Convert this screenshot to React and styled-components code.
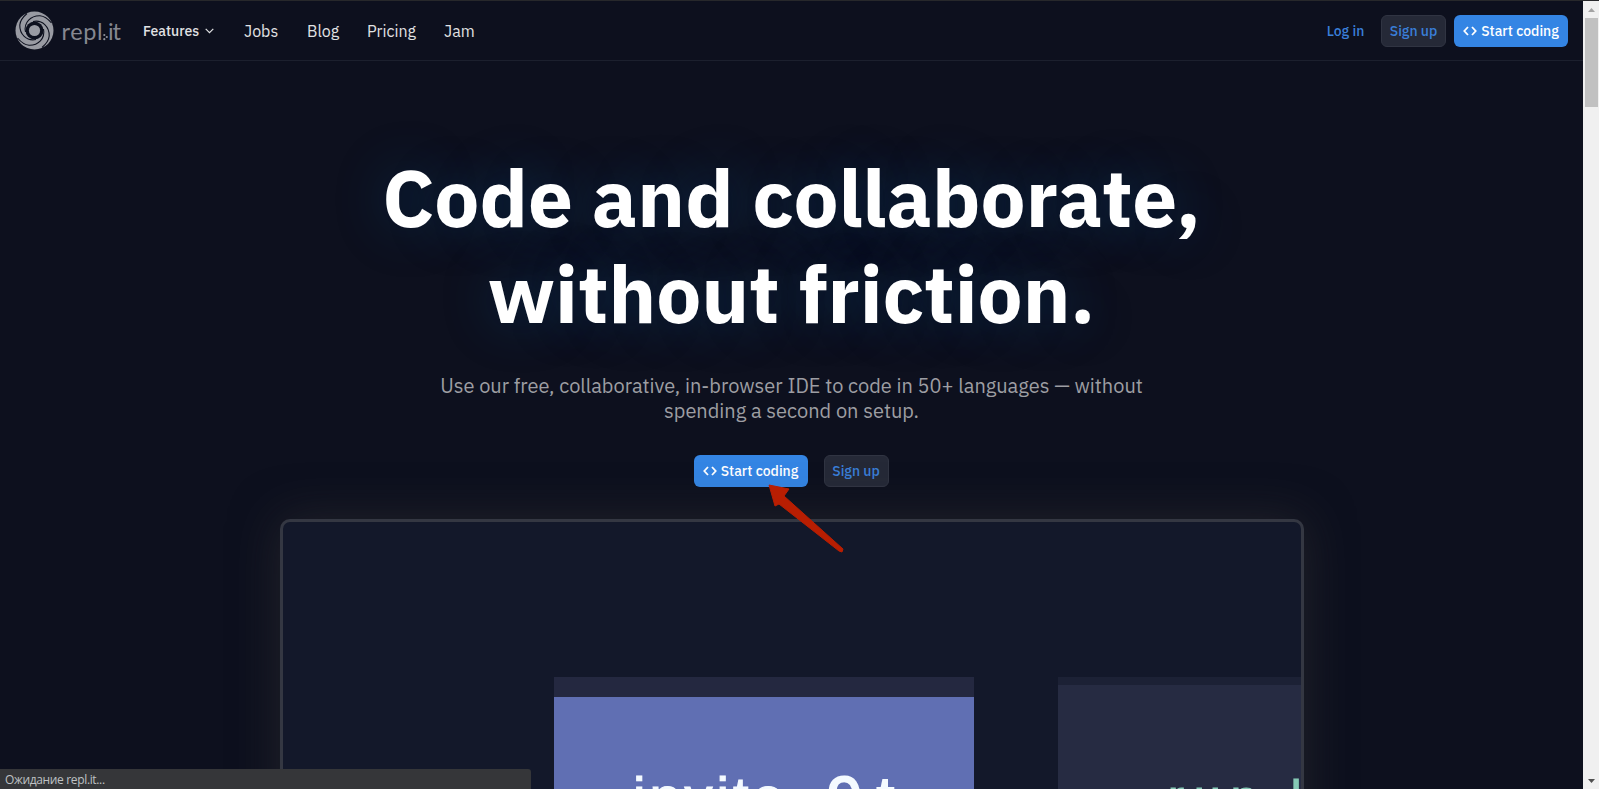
import React from "react";
import styled, { createGlobalStyle, css } from "styled-components";

const Global = createGlobalStyle`
  * { box-sizing: border-box; }
  html, body, #root { margin: 0; height: 789px; overflow: hidden; }
  body { background: #0d101e; font-family: "IBM Plex Sans", "Noto Sans", "Open Sans", sans-serif; color: #e1e2e4; }
`;
const Window = styled.div`
  position: relative;
  display: flex;
  width: 1599px;
  height: 789px;
  overflow: hidden;
`;
const Page = styled.div`
  width: 1583px;
  height: 789px;
  overflow: hidden;
  border-top: 1px solid #27282b;
  background: #0d101e;
`;
const Header = styled.header`
  display: flex;
  align-items: center;
  height: 60px;
  padding: 0 15px 0 14px;
  border-bottom: 1px solid #1c202e;
`;
const Brand = styled.a`
  display: flex;
  align-items: center;
  width: 129px;
  height: 42px;
`;
const Nav = styled.nav`
  display: flex;
  align-items: center;
  flex: 1;
  height: 32px;
`;
const NavLink = styled.a`
  display: flex;
  align-items: center;
  width: ${(p) => p.$width}px;
  font-size: ${(p) => (p.$menu ? 14 : 16)}px;
  font-weight: ${(p) => (p.$menu ? 500 : 400)};
  line-height: 24px;
  white-space: nowrap;
  svg { margin-left: 6px; }
`;
const Actions = styled.div`
  display: flex;
  gap: ${(p) => p.$gap}px;
`;
const Button = styled.button`
  display: flex;
  align-items: center;
  justify-content: center;
  gap: 4px;
  width: ${(p) => p.$width}px;
  height: 32px;
  padding: 0;
  border: 1px solid transparent;
  border-radius: 6px;
  background: none;
  color: #3a7fd9;
  font: 500 14px/20px "IBM Plex Sans", "Noto Sans", "Open Sans", sans-serif;
  white-space: nowrap;
  ${(p) => p.$kind === "secondary" && css`background: #252937; border-color: #303442;`}
  ${(p) => p.$kind === "primary" && css`background: #3485e4; color: #fff;`}
`;
const Hero = styled.main`
  display: flex;
  flex-direction: column;
  align-items: center;
`;
const Title = styled.h1`
  margin: 88px 0 0;
  color: #fff;
  font-size: 80px;
  font-weight: 700;
  line-height: 96px;
  text-align: center;
  text-shadow: 0 0 50px rgba(0, 80, 140, 0.42);
`;
const Line = styled.span`
  display: block;
  white-space: nowrap;
`;
const Lead = styled.p`
  margin: 32px 0 0;
  color: #9d9ea3;
  font-size: 20px;
  line-height: 25px;
  text-align: center;
`;
const HeroActions = styled(Actions)`
  margin-top: 32px;
  margin-right: 1px;
`;
const Preview = styled.section`
  display: flex;
  align-items: flex-start;
  width: 1024px;
  height: 580px;
  margin-top: 32px;
  margin-left: 1px;
  padding: 155px 0 0 271px;
  border: 3px solid #343742;
  border-radius: 10px;
  overflow: hidden;
  background: #13182a;
  box-shadow: 0 0 48px rgba(56, 54, 54, 0.5);
`;
const Tile = styled.div`
  flex: none;
  width: ${(p) => p.$width}px;
  height: 500px;
  margin-right: ${(p) => p.$after || 0}px;
  padding-top: ${(p) => p.$pad}px;
  padding-left: ${(p) => p.$inset}px;
  border-top: solid ${(p) => p.$edge};
  border-top-width: ${(p) => p.$band}px;
  background: ${(p) => p.$fill};
  color: ${(p) => p.$ink};
  font: ${(p) => p.$size}px/64px "Liberation Sans", Arial, sans-serif;
  letter-spacing: ${(p) => p.$track}px;
  -webkit-text-stroke: 1.2px ${(p) => p.$ink};
  white-space: pre;
  filter: blur(0.7px);
`;
const TileMark = styled.span`
  font-size: 64px;
  line-height: 40px;
  letter-spacing: 14px;
  vertical-align: -6px;
  -webkit-text-stroke-width: 2px;
`;
const Scrollbar = styled.div`
  display: flex;
  flex-direction: column;
  align-items: center;
  width: 16px;
  height: 789px;
  border-top: 1px solid #27282b;
  background: #f0f0f0;
`;
const ScrollArrow = styled.svg`
  flex: none;
  width: 16px;
  height: 17px;
`;
const Thumb = styled.div`
  width: 13px;
  height: 89px;
  margin-bottom: auto;
  background: #c1c1c1;
`;
const Status = styled.div`
  position: absolute;
  left: 0;
  bottom: 0;
  width: 531px;
  height: 20px;
  padding-left: 5px;
  border-radius: 0 3px 0 0;
  background: #353639;
  color: #bfc1c4;
  font: 12px/21px "Open Sans", "Noto Sans", sans-serif;
  letter-spacing: -0.35px;
`;
const Pointer = styled.svg`
  position: absolute;
  left: 766px;
  top: 482px;
  width: 80px;
  height: 72px;
`;

const Logo = () => (
  <svg width="108" height="42" viewBox="0 0 108 42">
    <circle cx="20.5" cy="20.5" r="19" fill="#999ba3" />
    <circle cx="20.5" cy="20.5" r="9" fill="#0d101e" />
    <circle cx="20.5" cy="20.5" r="5.600" fill="#999ba3" />
    {[0, 90, 180, 270].map((a) => (
      <path key={a} transform={`rotate(${a} 20.5 20.5)`} d="M11.5 22C9.500 12.500 17 5.500 26 5.800C31 6.200 34.500 9.500 37.500 13" fill="none" stroke="#0d101e" strokeWidth="1.1" />
    ))}
    <text x="47.5" y="29.5" fill="#858790" fontFamily="Lato, sans-serif" fontWeight="400" fontSize="23.5" textLength="41">repl</text>
    <circle cx="90.300" cy="25" r="1.100" fill="#8e9099" />
    <circle cx="92.800" cy="27" r="1.100" fill="#8e9099" />
    <circle cx="90.300" cy="29.200" r="1.100" fill="#8e9099" />
    <text x="94" y="29.5" fill="#858790" fontFamily="Lato, sans-serif" fontWeight="400" fontSize="23.5" textLength="13">it</text>
  </svg>
);
const Chevron = () => (
  <svg width="9" height="6" viewBox="0 0 9 6" fill="none" stroke="#e1e2e4" strokeWidth="1.2"><path d="M.7.8 4.5 4.6 8.3.8" /></svg>
);
const CodeIcon = () => (
  <svg width="14" height="10" viewBox="0 0 14 10" fill="none" stroke="#fff" strokeWidth="1.8"><path d="M5 1 1.300 5 5 9M9 1 12.700 5 9 9" /></svg>
);
const StartCoding = () => (
  <Button $kind="primary" $width={114}><CodeIcon />Start coding</Button>
);

export default function App() {
  return (
    <Window>
      <Global />
      <Page>
        <Header>
          <Brand><Logo /></Brand>
          <Nav>
            <NavLink $menu $width={101}>Features<Chevron /></NavLink>
            <NavLink $width={63}>Jobs</NavLink>
            <NavLink $width={60}>Blog</NavLink>
            <NavLink $width={77}>Pricing</NavLink>
            <NavLink $width={40}>Jam</NavLink>
          </Nav>
          <Actions $gap={8}>
            <Button $width={55}>Log in</Button>
            <Button $kind="secondary" $width={65}>Sign up</Button>
            <StartCoding />
          </Actions>
        </Header>
        <Hero>
          <Title>
            <Line>Code and collaborate,</Line>
            <Line>without friction.</Line>
          </Title>
          <Lead>
            <Line>Use our free, collaborative, in-browser IDE to code in 50+ languages — without</Line>
            <Line>spending a second on setup.</Line>
          </Lead>
          <HeroActions $gap={16}>
            <StartCoding />
            <Button $kind="secondary" $width={65}>Sign up</Button>
          </HeroActions>
          <Preview>
            <Tile $width={420} $after={84} $band={20} $edge="#242840" $fill="#606fb3" $ink="#f4faff" $size={56} $pad={68} $inset={79} $track={4}>invite  <TileMark>9t</TileMark></Tile>
            <Tile $width={300} $band={8} $edge="#1c2135" $fill="#262b42" $ink="#86c9b5" $size={48} $pad={81} $inset={110} $track={10}>run l</Tile>
          </Preview>
        </Hero>
      </Page>
      <Scrollbar>
        <ScrollArrow viewBox="0 0 16 17"><path d="M5 11h7L8.500 7z" fill="#a3a3a3" /></ScrollArrow>
        <Thumb />
        <ScrollArrow viewBox="0 0 16 17"><path d="M5 7h7L8.500 11z" fill="#505050" /></ScrollArrow>
      </Scrollbar>
      <Pointer viewBox="0 0 80 72"><path d="M3 3 23 7 18 14 77 67 76 70 73 69 13 22 9 24Z" fill="#b81e02" stroke="#b81e02" strokeLinejoin="round" /></Pointer>
      <Status>Ожидание repl.it...</Status>
    </Window>
  );
}
